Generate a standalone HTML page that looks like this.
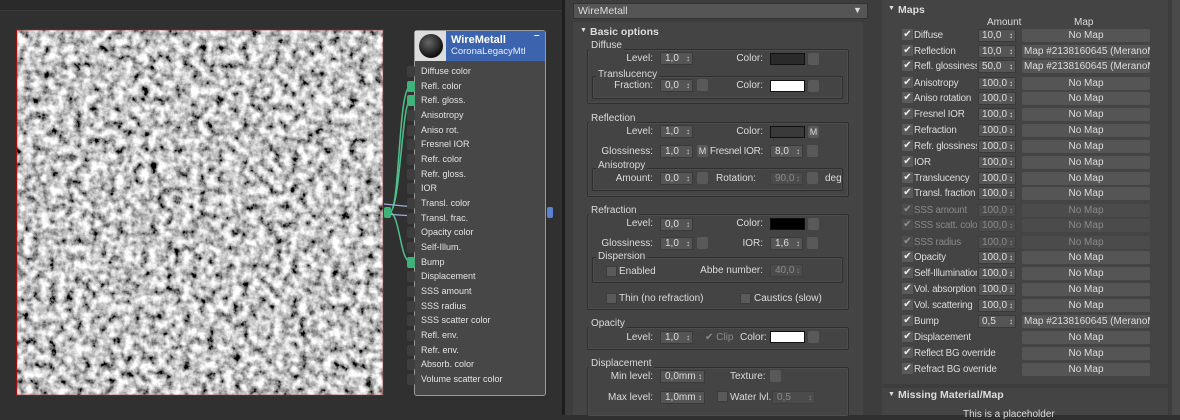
<!DOCTYPE html>
<html><head><meta charset="utf-8"><style>
*{margin:0;padding:0;box-sizing:border-box}
body{width:1180px;height:415px;overflow:hidden;background:#303030;font-family:"Liberation Sans",sans-serif;font-size:10px;color:#dcdcdc;position:relative}
.a{position:absolute;white-space:nowrap}
.r{text-align:right}
.sp{position:absolute;height:13px;background:#555;border:1px solid #3a3a3a;color:#ddd;padding-left:4px;line-height:11px;font-size:10px;white-space:nowrap}
.sp::after{content:"\2195";position:absolute;right:2px;top:0;font-size:8px;color:#ccc}
.bt{position:absolute;width:11px;height:12px;background:#595959;border-radius:2px}
.gb{position:absolute;border:1px solid #2f2f2f;box-shadow:inset 0 0 0 1px #4d4d4d;border-radius:2px}
.gl{position:absolute;background:#444;padding:0 2px;line-height:11px}
.cb{position:absolute;width:11px;height:11px;background:#5a5a5a;border:1px solid #3c3c3c}
.nm{position:absolute;left:1022px;width:128px;height:13px;background:#555;border-radius:2px;text-align:center;line-height:13px;color:#ddd;white-space:nowrap;overflow:hidden;font-size:10px}
.ck{position:absolute;left:902px;width:11px;height:11px;background:#5a5a5a;font-size:10px;line-height:11px;text-align:center;color:#eee}
.ml{position:absolute;left:914px;line-height:13px;white-space:nowrap;width:63px;overflow:hidden;font-size:9.8px;letter-spacing:-0.2px}
.ml.w{width:auto}
.ms{position:absolute;left:978px;width:38px;height:13px;background:#555;border:1px solid #3a3a3a;padding-left:3px;line-height:11px;font-size:10px}
.ms::after{content:"\2195";position:absolute;right:2px;top:0;font-size:8px}
.dim{opacity:.45}
.nr{position:absolute;left:421px;font-size:9px;line-height:12px;color:#e4e4e4;white-space:nowrap}
.so{position:absolute;left:407px;width:8px;height:11px;background:#3e3e3e;border-radius:2px}
</style></head><body>
<div class="a" style="left:0;top:0;width:562px;height:11px;background:#2a2a2a;border-bottom:1px solid #3a3a3a"></div>
<div class="a" style="left:562px;top:0;width:3px;height:415px;background:#1e1e1e"></div>
<svg class="a" style="left:16px;top:29px" width="368" height="367">
<filter id="n"><feTurbulence type="fractalNoise" baseFrequency="0.12" numOctaves="5" seed="3"/><feColorMatrix type="matrix" values="2.0 0 0 0 -0.45 2.0 0 0 0 -0.45 2.0 0 0 0 -0.45 0 0 0 0 1"/></filter>
<rect width="368" height="367" fill="#888"/>
<rect width="368" height="367" filter="url(#n)"/>
<rect x="0.5" y="0.5" width="367" height="366" fill="none" stroke="#a01010" stroke-width="1.5"/>
</svg>
<svg class="a" style="left:380px;top:70px" width="180" height="200">
<path d="M10 142 C20 140,18 20,30 16" stroke="#4fc08a" fill="none" stroke-width="1.5"/>
<path d="M10 142 C20 140,22 32,30 30" stroke="#4fc08a" fill="none" stroke-width="1.5"/>
<path d="M10 142 C20 145,20 190,30 192" stroke="#4fc08a" fill="none" stroke-width="1.5"/>
<path d="M4 134 L34 137 M4 144 L34 146" stroke="#9ab0d8" stroke-width="1.2"/>
<rect x="4" y="137" width="7" height="11" rx="2" fill="#3fb27a"/>
<rect x="167" y="137" width="6" height="11" rx="2" fill="#5a82d0"/>
</svg>
<div class="a" style="left:414px;top:30px;width:132px;height:366px;background:#474747;border:1px solid #9a9a9a;border-radius:3px"></div>
<div class="a" style="left:415px;top:31px;width:31px;height:30px;background:#ddd"></div>
<div class="a" style="left:419px;top:34px;width:24px;height:24px;border-radius:50%;background:radial-gradient(circle at 40% 35%,#666,#111 70%)"></div>
<div class="a" style="left:446px;top:31px;width:99px;height:30px;background:#3c63ae"></div>
<div class="a" style="left:451px;top:34px;font-size:11px;color:#fff;font-weight:bold">WireMetall</div>
<div class="a" style="left:451px;top:46px;font-size:9.5px;color:#e8eefa">CoronaLegacyMtl</div>
<div class="a" style="left:534px;top:30px;color:#fff;font-weight:bold">–</div>
<div class="so" style="top:66px"></div><div class="nr" style="top:65px">Diffuse color</div>
<div class="so" style="top:81px;background:#3fb27a"></div><div class="nr" style="top:80px">Refl. color</div>
<div class="so" style="top:95px;background:#3fb27a"></div><div class="nr" style="top:94px">Refl. gloss.</div>
<div class="so" style="top:110px"></div><div class="nr" style="top:109px">Anisotropy</div>
<div class="so" style="top:125px"></div><div class="nr" style="top:124px">Aniso rot.</div>
<div class="so" style="top:139px"></div><div class="nr" style="top:138px">Fresnel IOR</div>
<div class="so" style="top:154px"></div><div class="nr" style="top:153px">Refr. color</div>
<div class="so" style="top:169px"></div><div class="nr" style="top:168px">Refr. gloss.</div>
<div class="so" style="top:183px"></div><div class="nr" style="top:182px">IOR</div>
<div class="so" style="top:198px"></div><div class="nr" style="top:197px">Transl. color</div>
<div class="so" style="top:213px"></div><div class="nr" style="top:212px">Transl. frac.</div>
<div class="so" style="top:227px"></div><div class="nr" style="top:226px">Opacity color</div>
<div class="so" style="top:242px"></div><div class="nr" style="top:241px">Self-Illum.</div>
<div class="so" style="top:257px;background:#3fb27a"></div><div class="nr" style="top:256px">Bump</div>
<div class="so" style="top:271px"></div><div class="nr" style="top:270px">Displacement</div>
<div class="so" style="top:286px"></div><div class="nr" style="top:285px">SSS amount</div>
<div class="so" style="top:301px"></div><div class="nr" style="top:300px">SSS radius</div>
<div class="so" style="top:315px"></div><div class="nr" style="top:314px">SSS scatter color</div>
<div class="so" style="top:330px"></div><div class="nr" style="top:329px">Refl. env.</div>
<div class="so" style="top:345px"></div><div class="nr" style="top:344px">Refr. env.</div>
<div class="so" style="top:359px"></div><div class="nr" style="top:358px">Absorb. color</div>
<div class="so" style="top:374px"></div><div class="nr" style="top:373px">Volume scatter color</div>

<div class="a" style="left:565px;top:0;width:310px;height:415px;background:#3d3d3d"></div>
<div class="a" style="left:573px;top:3px;width:295px;height:16px;background:#555;border:1px solid #333"></div>
<div class="a" style="left:578px;top:5px;font-size:10.5px">WireMetall</div>
<div class="a" style="left:853px;top:5px;font-size:9px">▼</div>
<div class="a" style="left:573px;top:22px;width:290px;height:393px;background:#444"></div>
<div class="a" style="left:580px;top:27px;font-size:7px">▼</div>
<div class="a" style="left:590px;top:26px;font-weight:bold;font-size:10.5px">Basic options</div>
<div class="gb" style="left:587px;top:49px;width:262px;height:55px"></div><div class="gl" style="left:589px;top:40px">Diffuse</div>
<div class="a r" style="left:600px;width:53px;top:53px">Level:</div><div class="sp" style="left:660px;top:52px;width:33px">1,0</div>
<div class="a r" style="left:700px;width:63px;top:53px">Color:</div><div class="a" style="left:770px;top:53px;width:35px;height:12px;background:#2a2a2a;border:1px solid #111"></div><div class="bt" style="left:808px;top:53px"></div>
<div class="gb" style="left:592px;top:76px;width:251px;height:23px"></div><div class="gl" style="left:596px;top:69px">Translucency</div>
<div class="a r" style="left:600px;width:53px;top:80px">Fraction:</div><div class="sp" style="left:660px;top:79px;width:33px">0,0</div><div class="bt" style="left:697px;top:79px"></div>
<div class="a r" style="left:700px;width:63px;top:80px">Color:</div><div class="a" style="left:770px;top:80px;width:35px;height:12px;background:#fff;border:1px solid #111"></div><div class="bt" style="left:808px;top:80px"></div>

<div class="gb" style="left:587px;top:122px;width:262px;height:75px"></div><div class="gl" style="left:589px;top:113px">Reflection</div>
<div class="a r" style="left:600px;width:53px;top:126px">Level:</div><div class="sp" style="left:660px;top:125px;width:33px">1,0</div>
<div class="a r" style="left:700px;width:63px;top:126px">Color:</div><div class="a" style="left:770px;top:126px;width:35px;height:12px;background:#3a3a3a;border:1px solid #111"></div><div class="bt" style="left:808px;top:126px;font-size:9px;text-align:center;line-height:12px">M</div>
<div class="a r" style="left:590px;width:63px;top:146px">Glossiness:</div><div class="sp" style="left:660px;top:145px;width:33px">1,0</div><div class="bt" style="left:697px;top:145px;font-size:9px;text-align:center;line-height:12px">M</div>
<div class="a r" style="left:700px;width:63px;top:146px;letter-spacing:-0.3px">Fresnel IOR:</div><div class="sp" style="left:770px;top:145px;width:33px">8,0</div><div class="bt" style="left:807px;top:145px"></div>
<div class="gb" style="left:592px;top:168px;width:251px;height:23px"></div><div class="gl" style="left:596px;top:160px">Anisotropy</div>
<div class="a r" style="left:600px;width:53px;top:173px">Amount:</div><div class="sp" style="left:660px;top:172px;width:33px">0,0</div><div class="bt" style="left:697px;top:172px"></div>
<div class="a r" style="left:700px;width:56px;top:173px">Rotation:</div><div class="sp dim" style="left:770px;top:172px;width:33px">90,0</div><div class="bt" style="left:807px;top:172px"></div><div class="a" style="left:825px;top:173px">deg</div>

<div class="gb" style="left:587px;top:214px;width:262px;height:96px"></div><div class="gl" style="left:589px;top:205px">Refraction</div>
<div class="a r" style="left:600px;width:53px;top:218px">Level:</div><div class="sp" style="left:660px;top:218px;width:33px">0,0</div>
<div class="a r" style="left:700px;width:63px;top:218px">Color:</div><div class="a" style="left:770px;top:218px;width:35px;height:12px;background:#000;border:1px solid #111"></div><div class="bt" style="left:808px;top:218px"></div>
<div class="a r" style="left:590px;width:63px;top:238px">Glossiness:</div><div class="sp" style="left:660px;top:237px;width:33px">1,0</div><div class="bt" style="left:697px;top:237px"></div>
<div class="a r" style="left:700px;width:63px;top:238px">IOR:</div><div class="sp" style="left:770px;top:237px;width:33px">1,6</div><div class="bt" style="left:807px;top:237px"></div>
<div class="gb" style="left:592px;top:257px;width:251px;height:26px"></div><div class="gl" style="left:596px;top:251px">Dispersion</div>
<div class="cb" style="left:606px;top:266px"></div><div class="a" style="left:619px;top:266px">Enabled</div>
<div class="a r" style="left:700px;width:63px;top:265px">Abbe number:</div><div class="sp dim" style="left:770px;top:264px;width:33px">40,0</div>
<div class="cb" style="left:606px;top:293px"></div><div class="a" style="left:619px;top:293px">Thin (no refraction)</div>
<div class="cb" style="left:740px;top:293px"></div><div class="a" style="left:754px;top:293px">Caustics (slow)</div>

<div class="gb" style="left:587px;top:327px;width:262px;height:23px"></div><div class="gl" style="left:589px;top:318px">Opacity</div>
<div class="a r" style="left:600px;width:53px;top:332px">Level:</div><div class="sp" style="left:660px;top:331px;width:33px">1,0</div>
<div class="a dim" style="left:705px;top:332px">✔ Clip</div>
<div class="a" style="left:740px;top:332px">Color:</div><div class="a" style="left:770px;top:331px;width:35px;height:12px;background:#fff;border:1px solid #111"></div><div class="bt" style="left:808px;top:331px"></div>

<div class="gb" style="left:587px;top:367px;width:262px;height:50px"></div><div class="gl" style="left:589px;top:358px">Displacement</div>
<div class="a r" style="left:590px;width:63px;top:371px">Min level:</div><div class="sp" style="left:660px;top:370px;width:45px">0,0mm</div>
<div class="a" style="left:730px;top:371px">Texture:</div><div class="bt" style="left:770px;top:370px"></div>
<div class="a r" style="left:590px;width:63px;top:392px">Max level:</div><div class="sp" style="left:660px;top:391px;width:45px">1,0mm</div>
<div class="cb" style="left:717px;top:391px"></div><div class="a" style="left:730px;top:392px">Water lvl.</div><div class="sp dim" style="left:772px;top:391px;width:43px">0,5</div>

<div class="a" style="left:875px;top:0;width:305px;height:415px;background:#3d3d3d"></div>
<div class="a" style="left:1172px;top:0;width:8px;height:415px;background:#4a4a4a"></div>
<div class="a" style="left:882px;top:0;width:286px;height:384px;background:#444"></div>
<div class="a" style="left:888px;top:5px;font-size:7px">▼</div>
<div class="a" style="left:898px;top:4px;font-weight:bold;font-size:10.5px">Maps</div>
<div class="a" style="left:987px;top:17px">Amount</div>
<div class="a" style="left:1074px;top:17px">Map</div>
<div class="ck" style="top:29px">✔</div><div class="ml" style="top:29px">Diffuse</div><div class="ms" style="top:29px">10,0</div><div class="nm" style="top:29px">No Map</div>
<div class="ck" style="top:45px">✔</div><div class="ml" style="top:45px">Reflection</div><div class="ms" style="top:45px">10,0</div><div class="nm" style="top:45px;text-align:left;padding-left:2px">Map #2138160645 (MeranoMeta</div>
<div class="ck" style="top:60px">✔</div><div class="ml" style="top:60px">Refl. glossiness</div><div class="ms" style="top:60px">50,0</div><div class="nm" style="top:60px;text-align:left;padding-left:2px">Map #2138160645 (MeranoMeta</div>
<div class="ck" style="top:77px">✔</div><div class="ml" style="top:77px">Anisotropy</div><div class="ms" style="top:77px">100,0</div><div class="nm" style="top:77px">No Map</div>
<div class="ck" style="top:92px">✔</div><div class="ml" style="top:92px">Aniso rotation</div><div class="ms" style="top:92px">100,0</div><div class="nm" style="top:92px">No Map</div>
<div class="ck" style="top:108px">✔</div><div class="ml" style="top:108px">Fresnel IOR</div><div class="ms" style="top:108px">100,0</div><div class="nm" style="top:108px">No Map</div>
<div class="ck" style="top:124px">✔</div><div class="ml" style="top:124px">Refraction</div><div class="ms" style="top:124px">100,0</div><div class="nm" style="top:124px">No Map</div>
<div class="ck" style="top:140px">✔</div><div class="ml" style="top:140px">Refr. glossiness</div><div class="ms" style="top:140px">100,0</div><div class="nm" style="top:140px">No Map</div>
<div class="ck" style="top:156px">✔</div><div class="ml" style="top:156px">IOR</div><div class="ms" style="top:156px">100,0</div><div class="nm" style="top:156px">No Map</div>
<div class="ck" style="top:172px">✔</div><div class="ml" style="top:172px">Translucency</div><div class="ms" style="top:172px">100,0</div><div class="nm" style="top:172px">No Map</div>
<div class="ck" style="top:187px">✔</div><div class="ml" style="top:187px">Transl. fraction</div><div class="ms" style="top:187px">100,0</div><div class="nm" style="top:187px">No Map</div>
<div class="dim">
<div class="ck" style="top:204px">✔</div><div class="ml" style="top:204px">SSS amount</div><div class="ms" style="top:204px">100,0</div><div class="nm" style="top:204px">No Map</div>
<div class="ck" style="top:219px">✔</div><div class="ml" style="top:219px">SSS scatt. color</div><div class="ms" style="top:219px">100,0</div><div class="nm" style="top:219px">No Map</div>
<div class="ck" style="top:236px">✔</div><div class="ml" style="top:236px">SSS radius</div><div class="ms" style="top:236px">100,0</div><div class="nm" style="top:236px">No Map</div>
</div>
<div class="ck" style="top:251px">✔</div><div class="ml" style="top:251px">Opacity</div><div class="ms" style="top:251px">100,0</div><div class="nm" style="top:251px">No Map</div>
<div class="ck" style="top:267px">✔</div><div class="ml" style="top:267px">Self-Illumination</div><div class="ms" style="top:267px">100,0</div><div class="nm" style="top:267px">No Map</div>
<div class="ck" style="top:283px">✔</div><div class="ml" style="top:283px">Vol. absorption</div><div class="ms" style="top:283px">100,0</div><div class="nm" style="top:283px">No Map</div>
<div class="ck" style="top:299px">✔</div><div class="ml" style="top:299px">Vol. scattering</div><div class="ms" style="top:299px">100,0</div><div class="nm" style="top:299px">No Map</div>
<div class="ck" style="top:315px">✔</div><div class="ml" style="top:315px">Bump</div><div class="ms" style="top:315px">0,5</div><div class="nm" style="top:315px;text-align:left;padding-left:2px">Map #2138160645 (MeranoMeta</div>
<div class="ck" style="top:331px">✔</div><div class="ml w" style="top:331px">Displacement</div><div class="nm" style="top:331px">No Map</div>
<div class="ck" style="top:347px">✔</div><div class="ml w" style="top:347px">Reflect BG override</div><div class="nm" style="top:347px">No Map</div>
<div class="ck" style="top:363px">✔</div><div class="ml w" style="top:363px">Refract BG override</div><div class="nm" style="top:363px">No Map</div>
<div class="a" style="left:882px;top:388px;width:286px;height:27px;background:#444"></div>
<div class="a" style="left:888px;top:391px;font-size:7px">▼</div>
<div class="a" style="left:898px;top:389px;font-weight:bold;font-size:10.5px">Missing Material/Map</div>
<div class="a" style="left:963px;top:409px">This is a placeholder</div>
</body></html>
